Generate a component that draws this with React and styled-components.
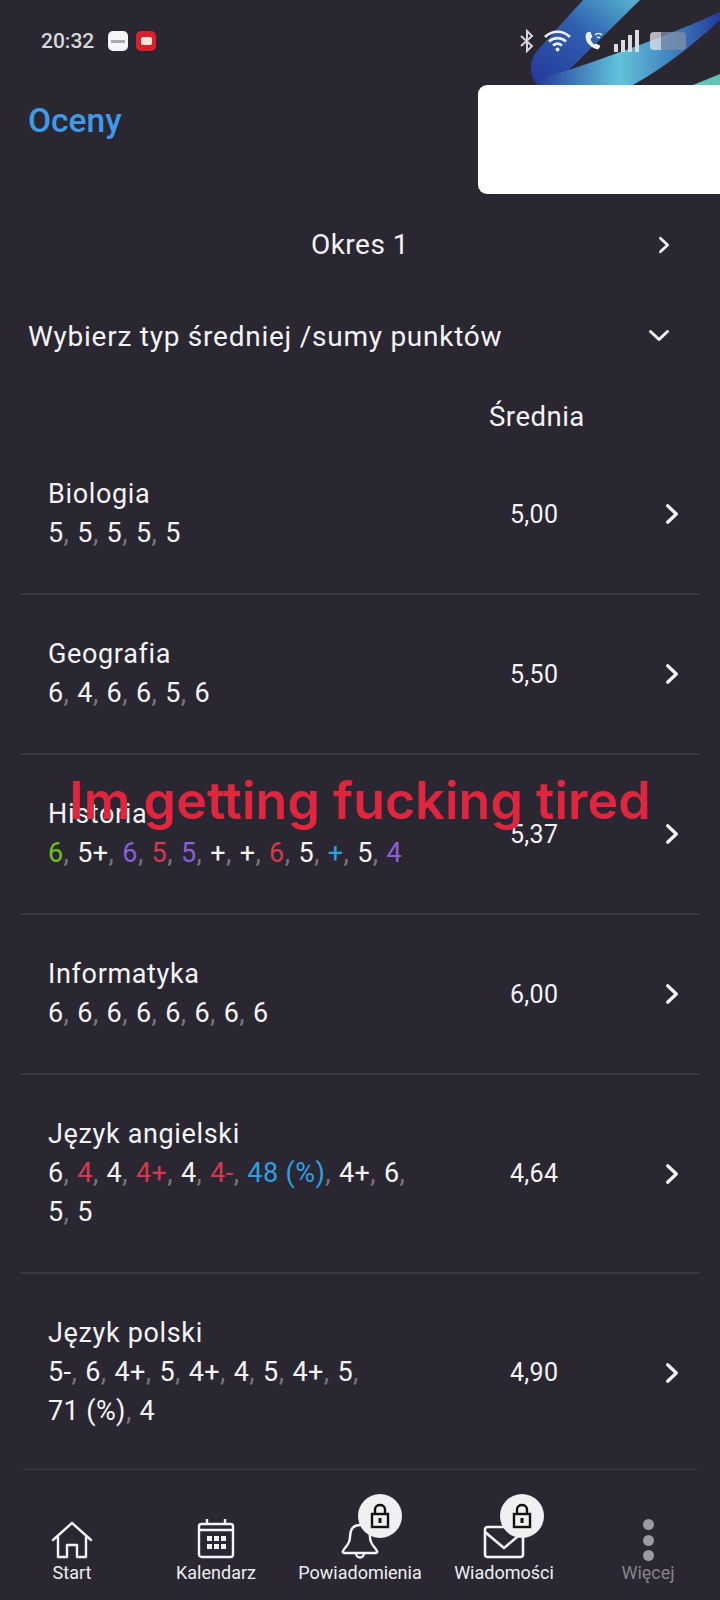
import React from "react";
import styled, { createGlobalStyle } from "styled-components";

const W = "#f4f4f6";
const R = "#d8374e";
const P = "#8a5fd8";
const B = "#2f9fe0";
const G = "#6fc21c";

const subjects = [
  { name: "Biologia", avg: "5,00", grades: [["5"], ["5"], ["5"], ["5"], ["5"]] },
  { name: "Geografia", avg: "5,50", grades: [["6"], ["4"], ["6"], ["6"], ["5"], ["6"]] },
  {
    name: "Historia",
    avg: "5,37",
    grades: [["6", G], ["5+"], ["6", P], ["5", R], ["5", P], ["+"], ["+"], ["6", R], ["5"], ["+", B], ["5"], ["4", P]],
  },
  { name: "Informatyka", avg: "6,00", grades: [["6"], ["6"], ["6"], ["6"], ["6"], ["6"], ["6"], ["6"]] },
  {
    name: "Język angielski",
    avg: "4,64",
    grades: [["6"], ["4", R], ["4"], ["4+", R], ["4"], ["4-", R], ["48 (%)", B], ["4+"], ["6"], ["5"], ["5"]],
  },
  {
    name: "Język polski",
    avg: "4,90",
    grades: [["5-"], ["6"], ["4+"], ["5"], ["4+"], ["4"], ["5"], ["4+"], ["5"], ["71 (%)"], ["4"]],
  },
];

const ChevronRight = ({ size = 22 }) => (
  <svg width={size} height={size} viewBox="0 0 22 22" fill="none" stroke={W} strokeWidth="3" strokeLinecap="round" strokeLinejoin="round">
    <path d="M7 3.5 15 11 7 18.5" />
  </svg>
);

const ChevronDown = () => (
  <svg width="24" height="24" viewBox="0 0 24 24" fill="none" stroke={W} strokeWidth="3" strokeLinecap="round" strokeLinejoin="round">
    <path d="M3.5 7.5 12 15.5 20.5 7.5" />
  </svg>
);

const Ribbon = () => (
  <svg width="200" height="90" viewBox="0 0 200 90">
    <defs>
      <linearGradient id="bandA" x1="0" y1="1" x2="1" y2="0">
        <stop offset="0" stopColor="#24389c" />
        <stop offset="0.55" stopColor="#2f5fae" />
        <stop offset="1" stopColor="#58b6d2" />
      </linearGradient>
      <linearGradient id="bandB" x1="0" y1="0" x2="1" y2="0">
        <stop offset="0" stopColor="#24389c" />
        <stop offset="0.45" stopColor="#62c3da" />
        <stop offset="0.75" stopColor="#3f7fbc" />
        <stop offset="1" stopColor="#24389c" />
      </linearGradient>
    </defs>
    <path d="M63 0H120L49 70 113 85H17C8 72 10 62 16 52Z" fill="url(#bandA)" />
    <path d="M49 70C90 56 150 35 200 12V20C170 48 140 70 113 85H17C22 78 34 74 49 70Z" fill="url(#bandB)" />
    <path d="M173 85 200 74V85Z" fill="#62c3b8" />
  </svg>
);

const Bluetooth = () => (
  <svg width="14" height="24" viewBox="0 0 14 24" fill="none" stroke="#d6d6da" strokeWidth="2">
    <path d="M1 7 12 17 7 22V2L12 7 1 17" />
  </svg>
);

const Wifi = () => (
  <svg width="30" height="24" viewBox="0 0 30 24" fill="none" stroke="#eef0f8" strokeWidth="2.6">
    <path d="M2 8C9 1 20 1 27 8M6 12.5C11 8 18 8 23 12.5M10 16.5C13 14 16 14 19 16.5" />
    <circle cx="14.5" cy="20.5" r="2" fill="#eef0f8" stroke="none" />
  </svg>
);

const Phone = () => (
  <svg width="22" height="24" viewBox="0 0 22 24" fill="none" stroke="#eef0f8">
    <path d="M5 4C2 9 6 18 16 20L18 17 14 15 12 16C10 14 8.500 12 8 9.500L10 8 8 3Z" fill="#eef0f8" strokeWidth="1" />
    <path d="M13 6C15 4 18 4 20 6M15 9C16 8 17 8 18 9" strokeWidth="1.400" />
  </svg>
);

const Signal = () => (
  <svg width="28" height="22" viewBox="0 0 28 22" fill="#dcdce0">
    <rect x="1" y="14" width="4" height="8" />
    <rect x="8" y="10" width="4" height="12" />
    <rect x="15" y="5" width="4" height="17" />
    <rect x="22" y="0" width="4" height="22" />
  </svg>
);

const HomeIcon = () => (
  <svg width="42" height="38" viewBox="0 0 42 38" fill="none" stroke={W} strokeWidth="2.400" strokeLinejoin="round" strokeLinecap="round">
    <path d="M2 19 21 2 40 19M7 16V36H16V24H26V36H35V16" />
  </svg>
);

const CalendarIcon = () => (
  <svg width="38" height="40" viewBox="0 0 38 40" fill="none" stroke={W} strokeWidth="2.400">
    <rect x="2" y="5" width="34" height="33" rx="2.500" />
    <path d="M2 11H36M10 0V5M28 0V5" />
    <g fill={W} stroke="none">
      <rect x="10" y="17" width="5" height="5" />
      <rect x="17" y="17" width="5" height="5" />
      <rect x="24" y="17" width="5" height="5" />
      <rect x="10" y="25" width="5" height="5" />
      <rect x="17" y="25" width="5" height="5" />
      <rect x="24" y="25" width="5" height="5" />
    </g>
  </svg>
);

const BellIcon = () => (
  <svg width="38" height="36" viewBox="0 0 38 36" fill="none" stroke={W} strokeWidth="2.400" strokeLinejoin="round">
    <path d="M19 2C11 2 9 8 9 14 9 21 5 23 2 28 1.500 29.500 2 30 4 30H34C36 30 36.500 29.500 36 28 33 23 29 21 29 14 29 8 27 2 19 2Z" />
    <path d="M15 30C15 36 23 36 23 30" />
  </svg>
);

const MailIcon = () => (
  <svg width="42" height="34" viewBox="0 0 42 34" fill="none" stroke={W} strokeWidth="2.600" strokeLinejoin="round">
    <rect x="2" y="2" width="38" height="30" rx="2.500" />
    <path d="M2 7 21 23 40 7" />
  </svg>
);

const LockIcon = () => (
  <svg width="20" height="26" viewBox="0 0 20 26" fill="none" stroke="#111" strokeWidth="2.400">
    <path d="M5 11V6.500C5 0.500 15 0.500 15 6.500V11" />
    <rect x="2" y="11" width="16" height="13" />
    <rect x="8.500" y="15" width="3" height="5" fill="#111" stroke="none" />
  </svg>
);

const navItems = [
  { label: "Start", icon: <HomeIcon /> },
  { label: "Kalendarz", icon: <CalendarIcon /> },
  { label: "Powiadomienia", icon: <BellIcon />, locked: true },
  { label: "Wiadomości", icon: <MailIcon />, locked: true },
  { label: "Więcej", muted: true, dots: true },
];

const App = () => {
  return (
    <>
      <GlobalStyle />
      <Page>
        <StatusBar>
          <Time>20:32</Time>
          <AppBadge $bg="#f5f5f7">
            <MiniLogo />
          </AppBadge>
          <AppBadge $bg="#d9202f">
            <MiniRecord />
          </AppBadge>
          <StatusIcons>
            <Bluetooth />
            <Wifi />
            <Phone />
            <Signal />
            <Battery />
          </StatusIcons>
        </StatusBar>

        <RibbonWrap>
          <Ribbon />
        </RibbonWrap>
        <WhiteCard />

        <Header>
          <Title>Oceny</Title>
        </Header>

        <PeriodRow>
          <PeriodLabel>Okres 1</PeriodLabel>
          <PeriodArrow>
            <ChevronRight size={20} />
          </PeriodArrow>
        </PeriodRow>

        <SelectRow>
          <span>Wybierz typ średniej /sumy punktów</span>
          <ChevronDown />
        </SelectRow>

        <AverageHead>Średnia</AverageHead>

        <List>
          {subjects.map((s) => (
            <Row key={s.name}>
              <Info>
                <Name>{s.name}</Name>
                <Grades>
                  {s.grades.map(([value, color], i) => (
                    <Grade key={i}>
                      <GradeValue $color={color}>{value}</GradeValue>
                      {i < s.grades.length - 1 && <Comma>,</Comma>}
                    </Grade>
                  ))}
                </Grades>
              </Info>
              <Average>{s.avg}</Average>
              <ChevronRight size={24} />
            </Row>
          ))}
        </List>

        <Caption>Im getting fucking tired</Caption>

        <BottomNav>
          {navItems.map((item) => (
            <NavItem key={item.label}>
              <NavIcon>
                {item.dots ? (
                  <Dots>
                    <Dot />
                    <Dot />
                    <Dot />
                  </Dots>
                ) : (
                  item.icon
                )}
                {item.locked && (
                  <LockBadge>
                    <LockIcon />
                  </LockBadge>
                )}
              </NavIcon>
              <NavLabel $muted={item.muted}>{item.label}</NavLabel>
            </NavItem>
          ))}
        </BottomNav>
      </Page>
    </>
  );
};

export default App;

const GlobalStyle = createGlobalStyle`
  html, body {
    margin: 0;
    padding: 0;
    background: #2a2732;
  }
`;

const Page = styled.div`
  position: relative;
  display: flex;
  flex-direction: column;
  width: 720px;
  height: 1600px;
  overflow: hidden;
  background: #2a2732;
  color: ${W};
  font-family: Roboto, "Liberation Sans", sans-serif;
`;

const StatusBar = styled.div`
  display: flex;
  align-items: center;
  height: 82px;
  padding: 0 34px 0 41px;
  box-sizing: border-box;
  position: relative;
  z-index: 2;
`;

const Time = styled.div`
  width: 67px;
  font-size: 21px;
  font-weight: 500;
  color: #d8d8dc;
`;

const AppBadge = styled.div`
  display: flex;
  align-items: center;
  justify-content: center;
  width: 20px;
  height: 20px;
  margin-right: 8px;
  border-radius: 5px;
  background: ${(props) => props.$bg};
`;

const MiniLogo = styled.div`
  width: 14px;
  height: 3px;
  background: #a9a9b2;
`;

const MiniRecord = styled.div`
  width: 11px;
  height: 8px;
  border-radius: 2px;
  background: #f6e6d8;
`;

const StatusIcons = styled.div`
  display: flex;
  align-items: center;
  gap: 9px;
  margin-left: auto;
`;

const Battery = styled.div`
  width: 36px;
  height: 18px;
  border-radius: 4px;
  background: linear-gradient(90deg, #e4e4e8 0 30%, #7f8fa8 30% 100%);
  opacity: 0.75;
`;

const RibbonWrap = styled.div`
  position: absolute;
  top: 0;
  right: 0;
  line-height: 0;
`;

const WhiteCard = styled.div`
  position: absolute;
  top: 85px;
  right: 0;
  width: 242px;
  height: 109px;
  border-radius: 9px 0 0 9px;
  background: #fff;
`;

const Header = styled.div`
  display: flex;
  align-items: center;
  height: 76px;
  padding-left: 28px;
`;

const Title = styled.div`
  font-size: 33.5px;
  font-weight: 500;
  color: #3f9bea;
`;

const PeriodRow = styled.div`
  display: flex;
  align-items: center;
  justify-content: center;
  position: relative;
  height: 90px;
  margin-top: 41px;
  font-size: 28px;
`;

const PeriodLabel = styled.div`
  letter-spacing: 0.5px;
`;

const PeriodArrow = styled.div`
  position: absolute;
  right: 46px;
  top: 36px;
  line-height: 0;
`;

const SelectRow = styled.div`
  display: flex;
  align-items: center;
  justify-content: space-between;
  height: 94px;
  padding: 0 49px 0 28px;
  font-size: 28px;
  letter-spacing: 0.75px;
`;

const AverageHead = styled.div`
  height: 34px;
  margin-top: 18px;
  padding-left: 489px;
  font-size: 27.5px;
  line-height: 32px;
  letter-spacing: 0.5px;
`;

const List = styled.div`
  display: flex;
  flex-direction: column;
  flex: 1;
  min-height: 0;
  padding: 0 21px;
`;

const Row = styled.div`
  display: grid;
  grid-template-columns: 462px 1fr 24px;
  align-items: center;
  padding: 40px 15px 40px 27px;
  border-bottom: 2px solid #3a3843;
  flex-shrink: 0;
  box-sizing: border-box;

  &:last-child {
    padding-bottom: 38px;
  }
`;

const Info = styled.div`
  display: flex;
  flex-direction: column;
`;

const Name = styled.div`
  font-size: 27px;
  line-height: 39px;
  letter-spacing: 0.65px;
`;

const Grades = styled.div`
  display: flex;
  flex-wrap: wrap;
  width: 376px;
  font-size: 27px;
  line-height: 39px;
  letter-spacing: 0.4px;
`;

const Grade = styled.span`
  white-space: pre;
  margin-right: 8px;
`;

const GradeValue = styled.span`
  color: ${(props) => props.$color || W};
`;

const Comma = styled.span`
  color: #77757f;
`;

const Average = styled.div`
  font-size: 25px;
  letter-spacing: 0.3px;
`;

const Caption = styled.div`
  position: absolute;
  top: 769px;
  left: 0;
  width: 720px;
  text-align: center;
  font-family: Inter, "Liberation Sans", sans-serif;
  font-size: 52px;
  font-weight: 600;
  color: #e0263f;
  white-space: nowrap;
`;

const BottomNav = styled.div`
  display: grid;
  grid-template-columns: 144px 144px 144px 144px 144px;
  height: 130px;
  flex-shrink: 0;
  background: #2a2732;
  position: relative;
`;

const NavItem = styled.div`
  display: flex;
  flex-direction: column;
  align-items: center;
  justify-content: flex-end;
  padding-bottom: 16px;
`;

const NavIcon = styled.div`
  position: relative;
  display: flex;
  align-items: flex-end;
  justify-content: center;
  height: 40px;
`;

const NavLabel = styled.div`
  margin-top: 3px;
  font-size: 18px;
  line-height: 22px;
  color: ${(props) => (props.$muted ? "#85838c" : "#eeeef1")};
`;

const LockBadge = styled.div`
  position: absolute;
  top: -25px;
  left: 17px;
  display: flex;
  align-items: center;
  justify-content: center;
  width: 44px;
  height: 44px;
  border-radius: 50%;
  background: #f0eff2;
`;

const Dots = styled.div`
  display: flex;
  flex-direction: column;
  gap: 4.5px;
  margin-bottom: -2px;
`;

const Dot = styled.div`
  width: 11px;
  height: 11px;
  border-radius: 50%;
  background: #9a9aa0;
`;
